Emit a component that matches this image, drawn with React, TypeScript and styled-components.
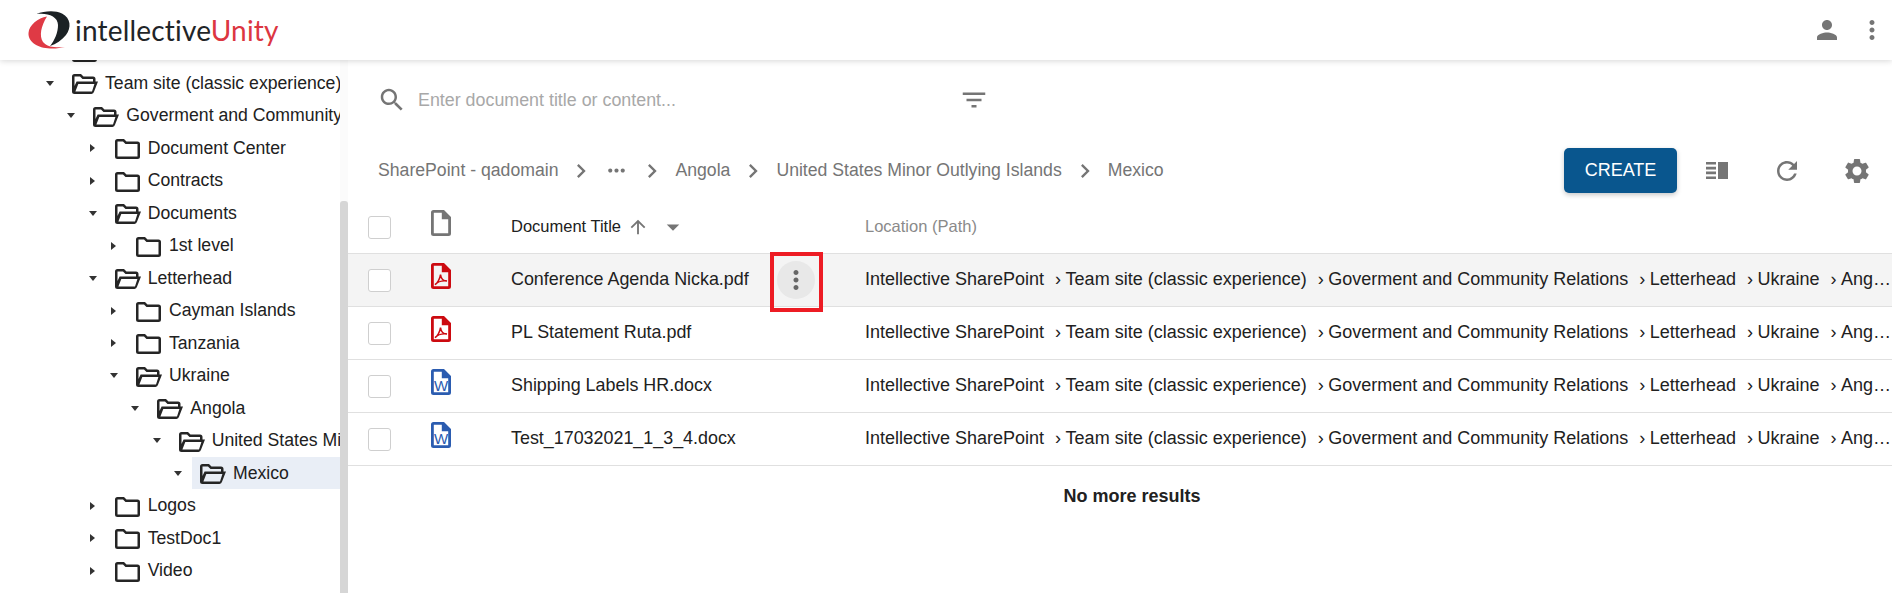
import React from "react";
import styled, { createGlobalStyle } from "styled-components";

const Global = createGlobalStyle`
  html, body {
    margin: 0;
    padding: 0;
    background: #fff;
    font-family: "Liberation Sans", Arial, sans-serif;
    font-size: 17.65px;
  }
`;

const MuiIcon = ({ d, size = 30 }: { d: string; size?: number }) => (
  <svg width={size} height={size} viewBox="0 0 24 24" fill="currentColor">
    <path d={d} />
  </svg>
);

const ICONS = {
  person: "M12 12c2.21 0 4-1.79 4-4s-1.79-4-4-4-4 1.79-4 4 1.79 4 4 4zm0 2c-2.67 0-8 1.34-8 4v2h16v-2c0-2.66-5.33-4-8-4z",
  kebab: "M12 8c1.1 0 2-.9 2-2s-.9-2-2-2-2 .9-2 2 .9 2 2 2zm0 2c-1.1 0-2 .9-2 2s.9 2 2 2 2-.9 2-2-.9-2-2-2zm0 6c-1.1 0-2 .9-2 2s.9 2 2 2 2-.9 2-2-.9-2-2-2z",
  search: "M15.5 14h-.79l-.28-.27C15.41 12.59 16 11.11 16 9.5 16 5.91 13.09 3 9.5 3S3 5.91 3 9.5 5.91 16 9.5 16c1.61 0 3.09-.59 4.23-1.57l.27.28v.79l5 4.99L20.49 19l-4.99-5zm-6 0C7.01 14 5 11.99 5 9.5S7.01 5 9.5 5 14 7.01 14 9.5 11.99 14 9.5 14z",
  filter: "M10 18h4v-2h-4v2zM3 6v2h18V6H3zm3 7h12v-2H6v2z",
  chevron: "M10 6L8.59 7.41 13.17 12l-4.58 4.59L10 18l6-6z",
  dots: "M6 10c-1.1 0-2 .9-2 2s.9 2 2 2 2-.9 2-2-.9-2-2-2zm12 0c-1.1 0-2 .9-2 2s.9 2 2 2 2-.9 2-2-.9-2-2-2zm-6 0c-1.1 0-2 .9-2 2s.9 2 2 2 2-.9 2-2-.9-2-2-2z",
  refresh: "M17.65 6.35C16.2 4.9 14.21 4 12 4c-4.42 0-7.99 3.58-7.99 8s3.57 8 7.99 8c3.73 0 6.84-2.55 7.73-6h-2.08c-.82 2.33-3.04 4-5.65 4-3.31 0-6-2.69-6-6s2.69-6 6-6c1.66 0 3.14.69 4.22 1.78L13 11h7V4l-2.35 2.35z",
  gear: "M19.14 12.94c.04-.3.06-.61.06-.94 0-.32-.02-.64-.07-.94l2.03-1.58c.18-.14.23-.41.12-.61l-1.92-3.32c-.12-.22-.37-.29-.59-.22l-2.39.96c-.5-.38-1.03-.7-1.62-.94l-.36-2.54c-.04-.24-.24-.41-.48-.41h-3.84c-.24 0-.43.17-.47.41l-.36 2.54c-.59.24-1.13.57-1.62.94l-2.39-.96c-.22-.08-.47 0-.59.22L2.74 8.87c-.12.21-.08.47.12.61l2.03 1.58c-.05.3-.09.63-.09.94s.02.64.07.94l-2.03 1.58c-.18.14-.23.41-.12.61l1.92 3.32c.12.22.37.29.59.22l2.39-.96c.5.38 1.03.7 1.62.94l.36 2.54c.05.24.24.41.48.41h3.84c.24 0 .44-.17.47-.41l.36-2.54c.59-.24 1.13-.56 1.62-.94l2.39.96c.22.08.47 0 .59-.22l1.92-3.32c.12-.22.07-.47-.12-.61l-2.01-1.58zM12 15.6c-1.98 0-3.6-1.62-3.6-3.6s1.62-3.6 3.6-3.6 3.6 1.62 3.6 3.6-1.62 3.6-3.6 3.6z",
  arrowUp: "M4 12l1.41 1.41L11 7.83V20h2V7.83l5.58 5.59L20 12l-8-8-8 8z",
  dropDown: "M7 10l5 5 5-5z",
};

const FILE_OUTLINE =
  "M2.5 0H13L20 7V23.5A2.5 2.5 0 0 1 17.5 26H2.5A2.5 2.5 0 0 1 0 23.5V2.5A2.5 2.5 0 0 1 2.5 0ZM2.8 2.8V23.2H17.2V9.2H10.8V2.8Z";

const FileGlyph = ({ children }: { children?: React.ReactNode }) => (
  <svg width="20" height="26" viewBox="0 0 20 26" fill="currentColor">
    <path fillRule="evenodd" d={FILE_OUTLINE} />
    {children}
  </svg>
);

const FolderClosed = () => (
  <svg width="25" height="20" viewBox="0 0 25 20" fill="currentColor">
    <path
      fillRule="evenodd"
      d="M2.5 0H9L11.5 2.5H22.5A2.5 2.5 0 0 1 25 5V17.5A2.5 2.5 0 0 1 22.5 20H2.5A2.5 2.5 0 0 1 0 17.5V2.5A2.5 2.5 0 0 1 2.5 0ZM2.5 2.5V17.5H22.5V5H10.5L8 2.5Z"
    />
  </svg>
);

const FolderOpen = () => (
  <svg width="26" height="20" viewBox="0 0 26 20" fill="currentColor">
    <path
      fillRule="evenodd"
      d="M2.5 0H9L11.5 2.5H21A2.5 2.5 0 0 1 23.5 5V7.5H21V5H10.5L8 2.5H2.5V12L4.6 7.5H26L22 17.8A3 3 0 0 1 19.5 20H2.5A2.5 2.5 0 0 1 0 17.5V2.5A2.5 2.5 0 0 1 2.5 0ZM6.3 10L3.4 17.5H20L22.4 10Z"
    />
  </svg>
);

const TREE = [
  { label: "Contoso Library", depth: 0, open: false },
  { label: "Team site (classic experience)", depth: 0, open: true },
  { label: "Goverment and Community Relations", depth: 1, open: true },
  { label: "Document Center", depth: 2, open: false },
  { label: "Contracts", depth: 2, open: false },
  { label: "Documents", depth: 2, open: true },
  { label: "1st level", depth: 3, open: false },
  { label: "Letterhead", depth: 2, open: true },
  { label: "Cayman Islands", depth: 3, open: false },
  { label: "Tanzania", depth: 3, open: false },
  { label: "Ukraine", depth: 3, open: true },
  { label: "Angola", depth: 4, open: true },
  { label: "United States Minor Outlying Islands", depth: 5, open: true },
  { label: "Mexico", depth: 6, open: true, selected: true },
  { label: "Logos", depth: 2, open: false },
  { label: "TestDoc1", depth: 2, open: false },
  { label: "Video", depth: 2, open: false },
];

const DOCS = [
  { name: "Conference Agenda Nicka.pdf", type: "pdf", active: true },
  { name: "PL Statement Ruta.pdf", type: "pdf" },
  { name: "Shipping Labels HR.docx", type: "word" },
  { name: "Test_17032021_1_3_4.docx", type: "word" },
];

const PATH = [
  "Intellective SharePoint",
  "Team site (classic experience)",
  "Goverment and Community Relations",
  "Letterhead",
  "Ukraine",
  "Angola",
  "United States Minor Outlying Islands",
  "Mexico",
];

export default function App() {
  return (
    <Page>
      <Global />
      <Header>
        <LogoMark viewBox="28 8 44 40">
          <path fill="#df3a45" d="M47 14.5C38 16 29 23 28.5 31C28 40 38 46 50 46.5C56 46.7 61 46 65 45C56 46 47 45 43 40C39 34 41 24 47 14.5Z" />
          <path fill="#1b2225" d="M36.5 12C44 9 55 8 62 11.5C71 16 71.5 26 66 33C62 38 56 42 50 44C55 38 58 30 58 23C58 14 47 10.5 36.5 12Z" />
        </LogoMark>
        <LogoText>
          intellective<LogoAccent>Unity</LogoAccent>
        </LogoText>
        <HeaderIcons>
          <MuiIcon d={ICONS.person} />
          <MuiIcon d={ICONS.kebab} />
        </HeaderIcons>
      </Header>
      <Body>
        <Sidebar>
          <Tree>
            {TREE.map((n) => (
              <TreeRow key={n.label} $depth={n.depth}>
                <CaretBox>
                  <Caret $open={n.open} />
                </CaretBox>
                <TreeLabel $selected={!!n.selected}>
                  <FolderBox>{n.open ? <FolderOpen /> : <FolderClosed />}</FolderBox>
                  {n.label}
                </TreeLabel>
              </TreeRow>
            ))}
          </Tree>
          <ScrollTrack>
            <ScrollThumb />
          </ScrollTrack>
        </Sidebar>
        <Main>
          <SearchBar>
            <MuiIcon d={ICONS.search} />
            <SearchInput placeholder="Enter document title or content..." />
            <MuiIcon d={ICONS.filter} />
          </SearchBar>
          <Toolbar>
            <Crumbs>
              <span>SharePoint - qadomain</span>
              <CrumbSep><MuiIcon d={ICONS.chevron} size={28} /></CrumbSep>
              <CrumbDots><MuiIcon d={ICONS.dots} size={25} /></CrumbDots>
              <CrumbSep><MuiIcon d={ICONS.chevron} size={28} /></CrumbSep>
              <span>Angola</span>
              <CrumbSep><MuiIcon d={ICONS.chevron} size={28} /></CrumbSep>
              <span>United States Minor Outlying Islands</span>
              <CrumbSep><MuiIcon d={ICONS.chevron} size={28} /></CrumbSep>
              <span>Mexico</span>
            </Crumbs>
            <CreateButton>CREATE</CreateButton>
            <ToolIcon>
              <svg width="24" height="20" viewBox="0 0 24 20" fill="currentColor">
                <path d="M1 1h10v2.6H1zM1 5.8h10v2.6H1zM1 10.6h10v2.6H1zM1 15.4h10V18H1zM13 1h10v17H13z" />
              </svg>
            </ToolIcon>
            <ToolIcon><MuiIcon d={ICONS.refresh} /></ToolIcon>
            <ToolIcon><MuiIcon d={ICONS.gear} /></ToolIcon>
          </Toolbar>
          <HeadRow>
            <Checkbox />
            <FileIcon $type="blank"><FileGlyph /></FileIcon>
            <TitleHead>
              Document Title
              <SortIcon><MuiIcon d={ICONS.arrowUp} size={22} /></SortIcon>
              <MuiIcon d={ICONS.dropDown} />
            </TitleHead>
            <LocationHead>Location (Path)</LocationHead>
          </HeadRow>
          {DOCS.map((d) => (
            <DocRow key={d.name} $active={!!d.active}>
              <Checkbox />
              <FileIcon $type={d.type}>
                {d.type === "pdf" ? (
                  <FileGlyph>
                    <path
                      fill="none"
                      stroke="currentColor"
                      strokeWidth="1.5"
                      d="M4 21.5C6.5 20.5 9 15.5 9.5 11.5C10 15.5 12.5 18 16 18C12.5 17.5 7 18.5 4 21.5Z"
                    />
                  </FileGlyph>
                ) : (
                  <FileGlyph>
                    <WordMark x="10" y="21.5" textAnchor="middle">W</WordMark>
                  </FileGlyph>
                )}
              </FileIcon>
              <TitleCell>
                <span>{d.name}</span>
                {d.active && (
                  <RowMenu>
                    <MuiIcon d={ICONS.kebab} />
                    <Highlight />
                  </RowMenu>
                )}
              </TitleCell>
              <PathCell>
                {PATH.map((p, i) => (
                  <React.Fragment key={p}>
                    {i > 0 && <PathSep>›</PathSep>}
                    {p}
                  </React.Fragment>
                ))}
              </PathCell>
            </DocRow>
          ))}
          <NoMore>No more results</NoMore>
        </Main>
      </Body>
    </Page>
  );
}

const Page = styled.div`
  width: 1892px;
  height: 593px;
  overflow: hidden;
  display: flex;
  flex-direction: column;
  color: #212121;
`;

const Header = styled.header`
  position: relative;
  z-index: 2;
  flex: 0 0 60px;
  display: flex;
  align-items: center;
  padding-left: 28px;
  background: #fff;
  box-shadow: 0 1px 6px rgba(0, 0, 0, 0.16);
`;

const LogoMark = styled.svg`
  width: 44px;
  height: 40px;
  margin-right: 3px;
`;

const LogoText = styled.div`
  font-family: "Lato", sans-serif;
  font-size: 28px;
  color: #1f2528;
  letter-spacing: 0.2px;
`;

const LogoAccent = styled.span`
  color: #dc3641;
`;

const HeaderIcons = styled.div`
  margin-left: auto;
  display: flex;
  gap: 15px;
  padding-right: 5px;
  color: #757575;
`;

const Body = styled.div`
  flex: 1;
  min-height: 0;
  display: flex;
`;

const Sidebar = styled.aside`
  flex: 0 0 348px;
  display: flex;
  overflow: hidden;
`;

const Tree = styled.div`
  flex: 0 0 340px;
  min-width: 0;
  margin-top: -25.75px;
`;

const TreeRow = styled.div<{ $depth: number }>`
  height: 32.5px;
  display: flex;
  align-items: center;
  padding-left: ${(p) => 40 + p.$depth * 21.33}px;
`;

const CaretBox = styled.span`
  flex: 0 0 20px;
  margin-right: 4px;
  display: flex;
  justify-content: center;
`;

const Caret = styled.span<{ $open: boolean }>`
  width: 0;
  height: 0;
  border-style: solid;
  border-color: transparent;
  ${(p) =>
    p.$open
      ? "border-width: 5px 4.5px 0 4.5px; border-top-color: #333;"
      : "border-width: 4.5px 0 4.5px 5px; border-left-color: #333;"}
`;

const TreeLabel = styled.span<{ $selected: boolean }>`
  flex: 1;
  min-width: 0;
  height: 100%;
  display: flex;
  align-items: center;
  padding-left: 8px;
  white-space: nowrap;
  overflow: hidden;
  background: ${(p) => (p.$selected ? "#e9eef6" : "transparent")};
`;

const FolderBox = styled.span`
  flex: 0 0 33px;
  display: flex;
  align-items: center;
  padding-top: 2px;
  color: #252525;
`;

const ScrollTrack = styled.div`
  flex: 1;
  min-width: 0;
  padding-top: 141px;
  background: #fbfbfb;
`;

const ScrollThumb = styled.div`
  height: 100%;
  background: #d6d6d6;
  border-radius: 3px 3px 0 0;
`;

const Main = styled.main`
  flex: 1;
  min-width: 0;
  display: flex;
  flex-direction: column;
`;

const SearchBar = styled.div`
  flex: 0 0 80px;
  display: flex;
  align-items: center;
  padding-left: 29px;
  color: #757575;
`;

const SearchInput = styled.input`
  width: 541px;
  margin: 0 0 0 11px;
  padding: 0;
  border: none;
  outline: none;
  background: none;
  font: inherit;
  font-size: 17.85px;
  &::placeholder {
    color: #a8a8a8;
    opacity: 1;
  }
`;

const Toolbar = styled.div`
  flex: 0 0 61px;
  display: flex;
  align-items: center;
  padding-left: 30px;
  color: #757575;
`;

const Crumbs = styled.div`
  flex: 1;
  display: flex;
  align-items: center;
`;

const CrumbSep = styled.span`
  display: flex;
  margin: 0 9px;
`;

const CrumbDots = styled.span`
  display: flex;
`;

const CreateButton = styled.button`
  width: 113px;
  height: 45px;
  margin-right: 5px;
  border: none;
  border-radius: 5px;
  background: #09568e;
  color: #fff;
  font: inherit;
  font-size: 18px;
  box-shadow: 0 2px 5px rgba(0, 0, 0, 0.22);
`;

const ToolIcon = styled.span`
  flex: 0 0 70px;
  display: flex;
  justify-content: center;
`;

const rowGrid = `
  display: grid;
  grid-template-columns: 63px 80px 354px minmax(0, 1fr);
  align-items: center;
  padding-left: 20px;
`;

const HeadRow = styled.div`
  ${rowGrid}
  flex: 0 0 53px;
  box-sizing: border-box;
  border-bottom: 1px solid #e0e0e0;
  font-size: 16.5px;
`;

const DocRow = styled.div<{ $active: boolean }>`
  ${rowGrid}
  flex: 0 0 53px;
  box-sizing: border-box;
  border-bottom: 1px solid #e0e0e0;
  background: ${(p) => (p.$active ? "#f4f4f4" : "#fff")};
`;

const Checkbox = styled.span`
  width: 23px;
  height: 23px;
  box-sizing: border-box;
  border: 1.5px solid #cfcfcf;
  border-radius: 3px;
  background: #fff;
`;

const FILE_COLORS: Record<string, string> = {
  blank: "#757575",
  pdf: "#cc0a10",
  word: "#2b5cb0",
};

const FileIcon = styled.span<{ $type: string }>`
  display: flex;
  margin-bottom: 8px;
  color: ${(p) => FILE_COLORS[p.$type]};
`;

const WordMark = styled.text`
  font-family: "Liberation Sans", Arial, sans-serif;
  font-size: 15px;
  font-weight: 400;
`;

const TitleHead = styled.div`
  display: flex;
  align-items: center;
  padding-bottom: 1px;
  color: #212121;
  svg {
    color: #757575;
  }
`;

const SortIcon = styled.span`
  display: flex;
  margin: 0 9px 0 6px;
`;

const LocationHead = styled.div`
  padding-bottom: 1px;
  color: #8a8a8a;
`;

const TitleCell = styled.div`
  position: relative;
  display: flex;
  align-items: center;
  padding-bottom: 2px;
  font-size: 17.9px;
`;

const RowMenu = styled.span`
  position: absolute;
  left: 266px;
  margin-top: 2px;
  width: 38px;
  height: 38px;
  display: flex;
  align-items: center;
  justify-content: center;
  border-radius: 50%;
  background: #e8e8e8;
  color: #666;
`;

const Highlight = styled.span`
  position: absolute;
  left: -7px;
  top: -9px;
  width: 53px;
  height: 60px;
  box-sizing: border-box;
  border: 4px solid #ed1c24;
`;

const PathCell = styled.div`
  padding-bottom: 2px;
  font-size: 18px;
  white-space: nowrap;
  overflow: hidden;
  text-overflow: ellipsis;
  padding-right: 1px;
`;

const PathSep = styled.span`
  margin: 0 4.5px 0 11px;
`;

const NoMore = styled.div`
  padding: 20px 0 0 24px;
  text-align: center;
  font-weight: 700;
  font-size: 18px;
`;
